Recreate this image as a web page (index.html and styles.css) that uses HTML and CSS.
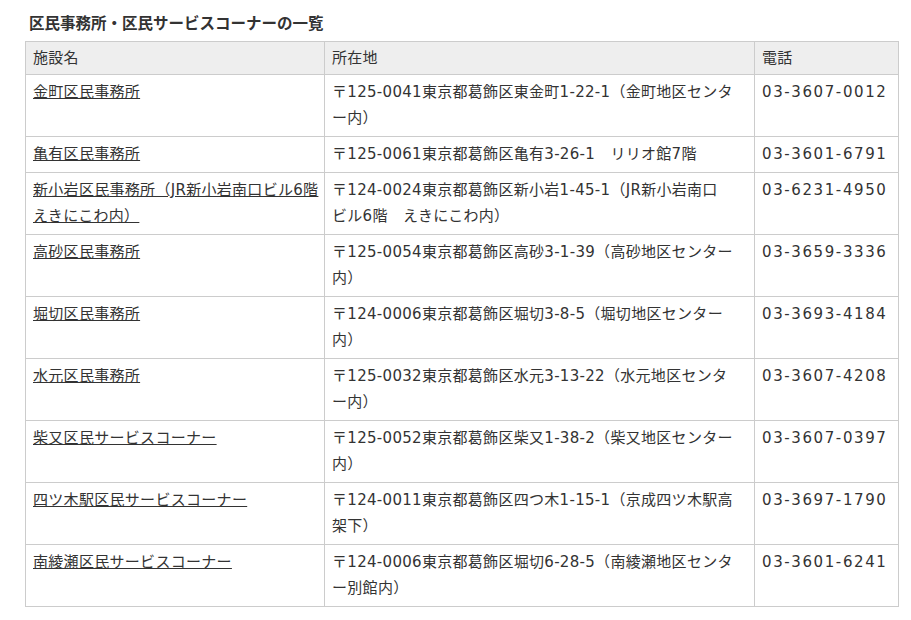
FILE: index.html
```html
<!DOCTYPE html>
<html lang="ja">
<head>
<meta charset="utf-8">
<title>区民事務所・区民サービスコーナーの一覧</title>
<link rel="stylesheet" href="styles.css">
</head>
<body>
<main class="page">
  <h2 class="title">区民事務所・区民サービスコーナーの一覧</h2>
  <table class="office-table">
    <colgroup>
      <col class="col-name">
      <col class="col-addr">
      <col class="col-tel">
    </colgroup>
    <thead>
      <tr><th>施設名</th><th>所在地</th><th>電話</th></tr>
    </thead>
    <tbody>
      <tr>
        <td><a href="#">金町区民事務所</a></td>
        <td>〒125-0041東京都葛飾区東金町1-22-1（金町地区センタ<br>ー内）</td>
        <td class="tel">03-3607-0012</td>
      </tr>
      <tr>
        <td><a href="#">亀有区民事務所</a></td>
        <td>〒125-0061東京都葛飾区亀有3-26-1　リリオ館7階</td>
        <td class="tel">03-3601-6791</td>
      </tr>
      <tr>
        <td><a href="#">新小岩区民事務所（JR新小岩南口ビル6階<br>えきにこわ内）</a></td>
        <td>〒124-0024東京都葛飾区新小岩1-45-1（JR新小岩南口<br>ビル6階　えきにこわ内）</td>
        <td class="tel">03-6231-4950</td>
      </tr>
      <tr>
        <td><a href="#">高砂区民事務所</a></td>
        <td>〒125-0054東京都葛飾区高砂3-1-39（高砂地区センター<br>内）</td>
        <td class="tel">03-3659-3336</td>
      </tr>
      <tr>
        <td><a href="#">堀切区民事務所</a></td>
        <td>〒124-0006東京都葛飾区堀切3-8-5（堀切地区センター<br>内）</td>
        <td class="tel">03-3693-4184</td>
      </tr>
      <tr>
        <td><a href="#">水元区民事務所</a></td>
        <td>〒125-0032東京都葛飾区水元3-13-22（水元地区センタ<br>ー内）</td>
        <td class="tel">03-3607-4208</td>
      </tr>
      <tr>
        <td><a href="#">柴又区民サービスコーナー</a></td>
        <td>〒125-0052東京都葛飾区柴又1-38-2（柴又地区センター<br>内）</td>
        <td class="tel">03-3607-0397</td>
      </tr>
      <tr>
        <td><a href="#">四ツ木駅区民サービスコーナー</a></td>
        <td>〒124-0011東京都葛飾区四つ木1-15-1（京成四ツ木駅高<br>架下）</td>
        <td class="tel">03-3697-1790</td>
      </tr>
      <tr>
        <td><a href="#">南綾瀬区民サービスコーナー</a></td>
        <td>〒124-0006東京都葛飾区堀切6-28-5（南綾瀬地区センタ<br>ー別館内）</td>
        <td class="tel">03-3601-6241</td>
      </tr>
    </tbody>
  </table>
</main>
</body>
</html>
```

FILE: styles.css
```css
html, body {
  margin: 0;
  padding: 0;
  background: #ffffff;
}

body {
  font-family: "DejaVu Sans", "Noto Sans CJK JP", sans-serif;
  font-size: 15px;
  color: #333333;
}

.page {
  padding: 10px 13px 0 25px;
}

.title {
  margin: 0 0 7px 4px;
  font-family: "Noto Sans CJK JP", sans-serif;
  font-size: 15.5px;
  font-weight: bold;
  line-height: 24px;
  color: #333333;
}

.office-table {
  width: 873px;
  border-collapse: collapse;
  table-layout: fixed;
  letter-spacing: 0.3px;
}

.col-name { width: 299px; }
.col-addr { width: 430px; }
.col-tel { width: 144px; }

.office-table th,
.office-table td {
  border: 1px solid #cccccc;
  text-align: left;
  vertical-align: top;
  line-height: 26px;
  padding: 4px 3px 5px 7px;
}

.office-table th {
  background: #eeeeee;
  font-weight: normal;
  padding-top: 3px;
  padding-bottom: 3px;
}

.office-table a {
  color: #333333;
  text-decoration: underline;
}

.office-table .tel {
  letter-spacing: 1.6px;
}
```
